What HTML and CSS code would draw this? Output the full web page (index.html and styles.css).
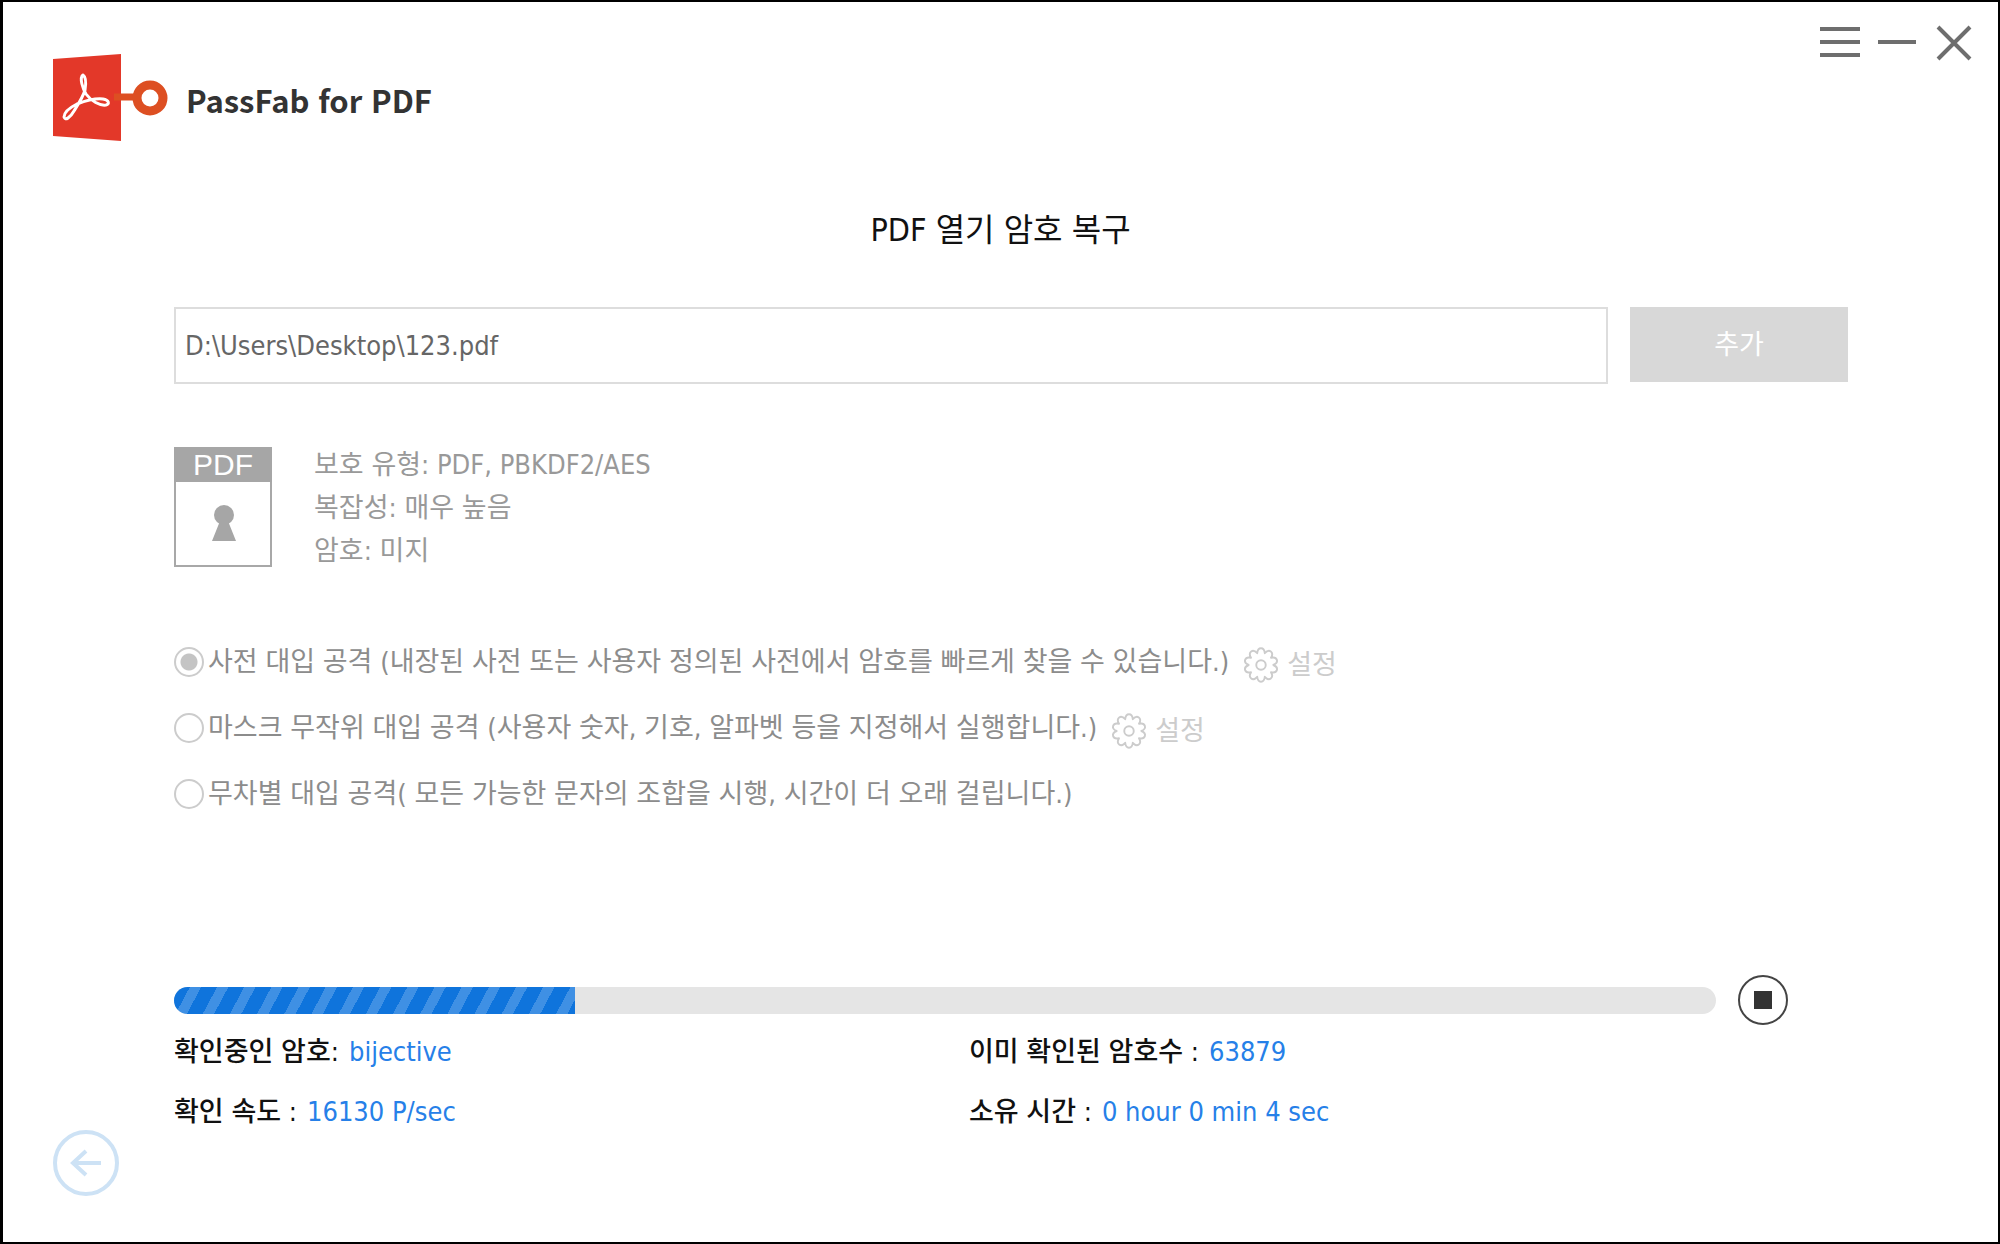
FILE: index.html
```
<!DOCTYPE html>
<html lang="ko">
<head>
    <meta charset="UTF-8">
    <meta name="viewport" content="width=device-width, initial-scale=1.0">
    <title>PassFab for PDF</title>
    <link rel="stylesheet" href="styles.css">
</head>
<body>
    <div class="window">
        <header class="titlebar">
            <div class="brand">
                <svg class="logo" viewBox="0 0 116 90" aria-hidden="true">
                    <path fill="#e33829" d="M1 6 69 1v87L1 83z"/>
                    <path fill="none" stroke="#fff" stroke-width="3" stroke-linecap="round" stroke-linejoin="round" d="M31 22c-4 3 0 14 3 19 5 7 14 12 20 11 4-1 3-5-3-6-8-1-18 2-26 5-6 3-13 8-13 13 1 4 6 1 10-6 5-8 9-14 11-21 1-6 1-13-2-15z"/>
                    <path fill="none" stroke="#dd4f22" stroke-width="7" d="M62 44h24"/>
                    <circle cx="98" cy="45" r="13" fill="#fff" stroke="#dd4f22" stroke-width="9"/>
                </svg>
                <h1 class="app-name">PassFab for PDF</h1>
            </div>
            <div class="window-buttons">
                <button type="button" aria-label="메뉴">
                    <svg width="40" height="40" viewBox="0 0 40 40"><path d="M0 7h40M0 20h40M0 33h40"/></svg>
                </button>
                <button type="button" aria-label="최소화">
                    <svg width="40" height="40" viewBox="0 0 40 40"><path d="M1 20h38"/></svg>
                </button>
                <button type="button" aria-label="닫기">
                    <svg width="40" height="40" viewBox="0 0 40 40"><path d="m4 5 32 32M36 5 4 37"/></svg>
                </button>
            </div>
        </header>

        <h2 class="page-title">PDF 열기 암호 복구</h2>

        <main class="content">
            <div class="file-row">
                <input type="text" class="file-path" value="D:\Users\Desktop\123.pdf" aria-label="파일 경로" readonly>
                <button type="button" class="add-button" disabled>추가</button>
            </div>

            <section class="file-info">
                <svg class="pdf-icon" viewBox="0 0 98 120" aria-hidden="true">
                    <path fill="#fff" stroke="#a8a8a8" stroke-width="2" d="M1 1h96v118H1z"/>
                    <path fill="#a6a6a6" d="M0 0h98v35H0z"/>
                    <text x="49" y="28" text-anchor="middle">PDF</text>
                    <circle cx="50" cy="68" r="10" fill="#a6a6a6"/>
                    <path fill="#a6a6a6" d="M46 74h8l8 20H38z"/>
                </svg>
                <ul class="file-details">
                    <li>보호 유형: PDF, PBKDF2/AES</li>
                    <li>복잡성: 매우 높음</li>
                    <li>암호: 미지</li>
                </ul>
            </section>

            <form class="attacks">
                <div class="attack">
                    <input type="radio" id="dictionary" name="attack" checked disabled>
                    <label for="dictionary">사전 대입 공격 (내장된 사전 또는 사용자 정의된 사전에서 암호를 빠르게 찾을 수 있습니다.)</label>
                    <button type="button" class="settings" disabled>
                        <svg viewBox="0 0 38 38" aria-hidden="true"><use href="#gear"/></svg>설정
                    </button>
                </div>
                <div class="attack">
                    <input type="radio" id="mask" name="attack" disabled>
                    <label for="mask">마스크 무작위 대입 공격 (사용자 숫자, 기호, 알파벳 등을 지정해서 실행합니다.)</label>
                    <button type="button" class="settings" disabled>
                        <svg viewBox="0 0 38 38" aria-hidden="true"><use href="#gear"/></svg>설정
                    </button>
                </div>
                <div class="attack">
                    <input type="radio" id="brute" name="attack" disabled>
                    <label for="brute">무차별 대입 공격( 모든 가능한 문자의 조합을 시행, 시간이 더 오래 걸립니다.)</label>
                </div>
            </form>

            <section class="status">
                <div class="progress-row">
                    <progress class="progress" value="26" max="100" aria-label="진행률"></progress>
                    <button type="button" class="stop" aria-label="중지"><span></span></button>
                </div>
                <dl class="stats">
                    <div><dt>확인중인 암호:</dt> <dd>bijective</dd></div>
                    <div><dt>이미 확인된 암호수 :</dt> <dd>63879</dd></div>
                    <div><dt>확인 속도 :</dt> <dd>16130 P/sec</dd></div>
                    <div><dt>소유 시간 :</dt> <dd>0 hour 0 min 4 sec</dd></div>
                </dl>
            </section>
        </main>

        <footer class="footer">
            <button type="button" class="back" aria-label="뒤로">
                <svg viewBox="0 0 66 66"><circle cx="33" cy="33" r="31"/><path d="M48 33H20M33 21 20 33l13 12"/></svg>
            </button>
        </footer>
    </div>

    <svg class="symbols" aria-hidden="true">
        <symbol id="gear" viewBox="-1 -1 40 40">
            <path d="M15 6.6C15.6-.3 22.4-.3 23 6.6 27.6 1.4 33.1 5.4 29.5 11.4 36.3 9.8 38.4 16.3 32 19 38.4 21.7 36.3 28.2 29.5 26.6 33.1 32.6 27.6 36.6 23 31.4 22.4 38.3 15.6 38.3 15 31.4 10.4 36.6 4.9 32.6 8.5 26.6 1.7 28.2-.4 21.7 6 19-.4 16.3 1.7 9.8 8.5 11.4 4.9 5.4 10.4 1.4 15 6.6z"/>
            <circle cx="19" cy="19" r="5"/>
        </symbol>
    </svg>
</body>
</html>
```
FILE: styles.css
```
* {
    box-sizing: border-box;
}
body {
    margin: 0;
    font-family: "DejaVu Sans Condensed", "Noto Sans CJK KR", sans-serif;
    font-size: 27px;
    line-height: 40px;
    color: #111;
    background-color: #fff;
}
button {
    padding: 0;
    border: 0;
    background: none;
    font: inherit;
    color: inherit;
}
h1, h2, ul, dl, dd {
    margin: 0;
    padding: 0;
}
svg {
    display: block;
}
.window {
    display: flex;
    flex-direction: column;
    min-height: 100vh;
    border: 2px solid #000;
    border-left-width: 3px;
}
.titlebar {
    display: flex;
    justify-content: space-between;
    align-items: flex-start;
    padding: 20px 24px 0 49px;
}
.brand {
    display: flex;
    align-items: center;
    gap: 18px;
    margin-top: 31px;
}
.logo {
    width: 116px;
    height: 90px;
}
.app-name {
    padding-top: 4px;
    font-family: "Noto Sans CJK KR", sans-serif;
    font-size: 31px;
    font-weight: bold;
    line-height: 40px;
    color: #333;
}
.window-buttons {
    display: flex;
    gap: 17px;
}
.window-buttons path {
    fill: none;
    stroke: #6e6e6e;
    stroke-width: 4;
}
.page-title {
    margin-top: 63px;
    font-size: 32px;
    font-weight: normal;
    line-height: 48px;
    text-align: center;
}
.content {
    padding: 53px 150px 0 171px;
}
.file-row {
    display: flex;
    align-items: flex-start;
    gap: 22px;
}
.file-path {
    flex: 1;
    height: 77px;
    padding: 0 9px;
    border: 2px solid #ddd;
    font: inherit;
    color: #666;
}
.add-button {
    width: 218px;
    height: 75px;
    background-color: #d8d8d8;
    color: #fff;
}
.file-info {
    display: flex;
    gap: 42px;
    margin-top: 63px;
}
.pdf-icon {
    width: 98px;
    height: 120px;
}
.pdf-icon text {
    font-family: "Liberation Sans", sans-serif;
    font-size: 30px;
    fill: #fff;
}
.file-details {
    list-style: none;
    line-height: 43px;
    margin-top: -4px;
    color: #999;
}
.attacks {
    margin-top: 57px;
    color: #8c8c8c;
}
.attack {
    display: flex;
    align-items: center;
    height: 66px;
}
.attack input {
    appearance: none;
    width: 30px;
    height: 30px;
    margin: 0 4px 0 0;
    border: 2px solid #ccc;
    border-radius: 50%;
}
.attack input:checked {
    background: radial-gradient(circle, #c4c4c4 8px, transparent 9px);
}
.settings {
    display: flex;
    align-items: center;
    gap: 7px;
    margin-left: 13px;
    padding-top: 6px;
    color: #ccc;
}
.settings svg {
    width: 38px;
    height: 38px;
}
#gear {
    fill: none;
    stroke: #ccc;
    stroke-width: 2;
    stroke-linejoin: round;
}
.status {
    margin: 148px 60px 0 0;
}
.progress-row {
    display: flex;
    align-items: center;
    gap: 22px;
}
.progress {
    appearance: none;
    flex: 1;
    height: 27px;
    border: 0;
    border-radius: 14px;
    overflow: hidden;
}
.progress::-webkit-progress-bar {
    background-color: #e5e5e5;
}
.progress::-webkit-progress-value {
    background: repeating-linear-gradient(118deg, #0f74dc 0 14px, #3f90e4 14px 24px);
}
.stop {
    display: flex;
    align-items: center;
    justify-content: center;
    width: 50px;
    height: 50px;
    border: 2px solid #444;
    border-radius: 50%;
}
.stop span {
    width: 18px;
    height: 18px;
    background-color: #333;
}
.stats {
    display: grid;
    grid-template-columns: 33fr 34fr;
    row-gap: 24px;
    margin-top: 9px;
    line-height: 36px;
}
.stats div {
    display: flex;
    gap: 10px;
}
.stats dt {
    font-weight: 500;
}
.stats dd {
    color: #2680e8;
}
.footer {
    padding: 0 50px;
}
.back {
    width: 66px;
    height: 66px;
}
.back svg {
    fill: none;
    stroke: #cde2f5;
    stroke-width: 4;
}
.symbols {
    position: absolute;
    width: 0;
    height: 0;
}
```
